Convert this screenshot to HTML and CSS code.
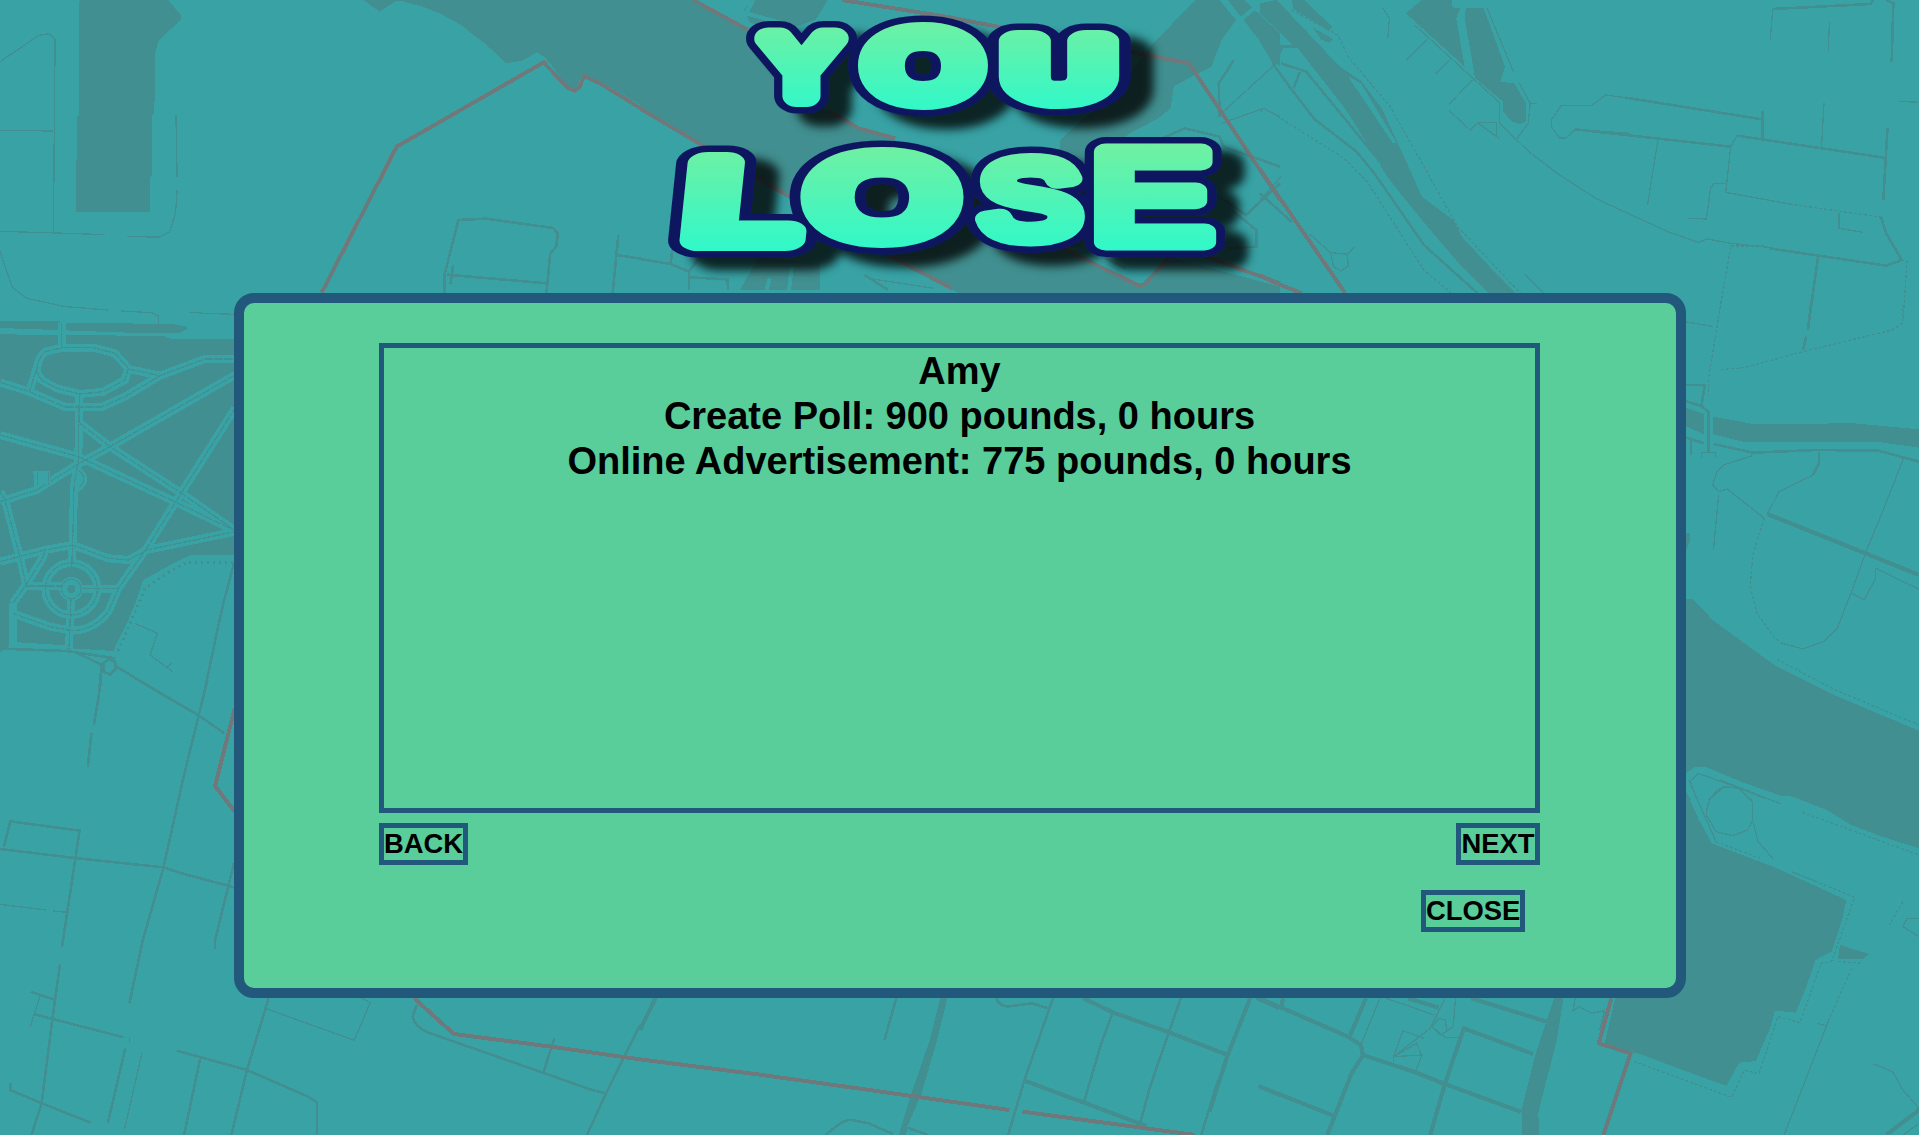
FILE: index.html
```
<!DOCTYPE html>
<html lang="en">
<head>
<meta charset="utf-8">
<title>You Lose</title>
<link rel="stylesheet" href="styles.css">
</head>
<body>
<svg class="map" viewBox="0 0 1919 1135" aria-hidden="true">
  <!-- north-west: docks, river and boundary -->
  <g transform="scale(.40816 .33333)">
    <path class="water" d="M198 0H412L443 45V60L388 122L381 155L378 340L372 345V528L367 532V636H186V600L189 350L194 345V5Z"/>
    <path class="water" d="M890 0L930 35L970 3H985L1040 22L1080 42L1130 75L1160 105L1190 132L1240 190L1280 182L1315 157L1335 172L1390 255L1410 270L1425 225L1450 232L1500 265L1570 315V0Z"/>
    <path class="road" d="M0 185L95 106L120 101L135 120L133 390L131 697M0 391L130 393M0 694L140 699L258 704M312 710L390 711L415 697L430 640L434 570M434 530L431 345M0 755L30 862L65 895L160 920L265 930M296 933L372 938L388 948V972M462 936L500 940L575 943"/>
    <path class="water" d="M0 964H148V984H0ZM160 969L420 972L458 980V990H160Z"/>
    <path class="road r3" d="M1089 878V825L1123 660L1190 656L1355 684L1367 700L1363 738L1348 762L1339 878M1095 824L1339 850M1110 795L1104 852M1515 705L1501 878M1512 765L1570 776"/>
    <path class="border" d="M788 878L972 440L1332 187L1390 262L1408 272L1420 262L1430 228L1470 250L1570 325"/>
  </g>
  <!-- river centre -->
  <g transform="translate(640 0) scale(.40816 .33333)">
    <path class="water" d="M0 0H140L260 90L460 330L535 385L620 415L1030 740L1220 860L1300 772L1568 860V885H790L600 765L370 595L165 440L0 318Z"/>
    <path class="water" d="M275 0H460L430 60L380 80L270 70L255 30ZM1360 0L1250 140L1180 250L1030 420L1030 740H1080L1150 450L1200 400L1270 355L1300 325L1308 258L1400 200L1425 120L1460 60L1420 0ZM1440 0L1568 200V100L1480 0ZM290 770L440 790V870H245Z"/>
    <path class="land-line" d="M278 0L260 40L350 70M480 0L440 60M1530 0L1460 70L1450 180L1415 250M310 870L318 835M365 870L372 800"/>
    <path class="road r3" d="M0 777L75 792L120 815L165 740M75 790L85 690M120 815V870M120 832L214 838L216 870M550 825L608 870M1140 775L1190 805M1270 420L1335 385L1420 410L1430 440L1568 500M1420 350L1418 250L1455 180M1380 560L1485 645L1568 550M1450 630L1510 690V740L1440 745"/>
    <path class="road" d="M1425 370L1528 325L1568 350M1420 345L1568 180M560 835L720 865"/>
    <path class="border" d="M130 0L265 90M495 0L750 50L910 88M1200 155L1345 190L1568 600M0 325L165 445L380 600M460 330L535 385L625 415M600 760L765 866M1020 735L1220 856L1235 853L1300 770M1375 765L1568 850"/>
  </g>
  <!-- north-east: railway and streets -->
  <g transform="translate(1260) scale(.42028 .33333)">
    <path class="water" d="M0 10L40 0L190 200L240 242L290 325L350 490L385 590L460 660L480 710L550 805L608 880H545L480 800L405 690L340 590L300 525L205 330L90 145H55L35 200L0 125V70L50 135H78L0 40ZM75 0H105L172 80L165 92L80 28ZM125 82L175 118L163 128L145 118ZM385 0H457V22L477 24L467 55L487 200L347 40ZM490 24H532L583 200L572 245L605 250L633 310V365L620 373L600 365L578 335V305L512 235L487 55Z"/>
    <path class="land-fill" d="M210 230L240 250L325 428L315 428ZM108 220L292 498L275 488L128 275Z"/>
    <path class="road r3" d="M30 190L70 260L130 358L230 455L272 520L390 735L518 880M50 190L110 215L292 495M80 265L95 215M0 580L75 665M1220 27L1452 12L1460 0M1490 0L1507 10L1503 185M1493 385L1483 600M1195 332V415M1478 652L1490 700L1527 780L1490 797L1212 745M1328 770L1305 975M750 388L1120 440M1135 407L1485 473M870 293L1195 358"/>
    <path class="road" d="M292 24L308 55L304 115M398 118L348 182M450 182L418 222M368 75L570 308V370L640 455L705 518L800 596L970 695L1043 727L1065 717L1120 730L1210 742M505 240L450 313M450 332L500 390L520 368H563V410M520 370L568 415M540 24L603 215M617 250L643 310L638 370L612 415M658 310H640M870 293L822 285L790 316H717L693 360V380L713 414H728L750 388L880 400M948 410L922 615M1120 440L1135 407M1120 440L1108 577L1260 612M1107 550H1080L1072 565L1062 657L1018 655M1378 640V685L1435 697M1342 310L1336 442M1355 65L1352 155M1220 27L1214 120M1520 304L1568 307M630 822L676 880M118 702L168 758L208 763L225 740M168 758L175 800L192 813L210 798L208 763M50 530L0 600"/>
    <path class="road dots" d="M0 335L12 326L200 475L255 545L390 810L455 880M75 30L185 105L210 170L310 320L390 500L470 680L620 880M1260 612L1480 652M1120 740L1086 990M1540 780L1530 960M1120 738H1200"/>
    <path class="border" d="M0 508L203 880M0 825L30 845L100 880"/>
  </g>
  <!-- west park -->
  <g transform="translate(0 300) scale(.33333)">
    <path class="water" d="M0 65L190 68L520 72L560 85V100H440L0 84ZM0 103L490 108L510 116H705V766H570L520 790L430 840L410 900L385 960L340 1053L215 1045L200 1050L30 1040L0 1056Z"/>
    <path class="path" d="M185 70V140M110 215Q112 175 135 155L190 143H280L345 160L385 205L375 240L310 275L240 282L170 265L125 240ZM110 205L88 275M0 247L88 275L195 321H305L375 290L480 227L615 177H705M385 207L480 227M238 282L235 480L222 560L218 735L215 800M0 405L235 470L525 605L700 690M240 370L330 440L545 580L700 688M0 605L110 570L230 495L330 440L705 225M705 325L540 585L440 745L355 865L325 935Q280 992 215 992L150 980L38 940M0 785L135 750L218 735L325 775L385 780L440 750L705 695M0 575L15 600L62 780L78 855L38 910M78 855L130 770L135 750M78 858H185M245 866H355M213 895L207 1045M38 910V1038L200 1048"/>
    <circle class="path" cx="214" cy="867" r="78"/><circle class="path" cx="214" cy="867" r="24"/>
    <path class="path-core" d="M185 70V140M110 215Q112 175 135 155L190 143H280L345 160L385 205L375 240L310 275L240 282L170 265L125 240ZM110 205L88 275M0 247L88 275L195 321H305L375 290L480 227L615 177H705M385 207L480 227M238 282L235 480L222 560L218 735L215 800M0 405L235 470L525 605L700 690M240 370L330 440L545 580L700 688M0 605L110 570L230 495L330 440L705 225M705 325L540 585L440 745L355 865L325 935Q280 992 215 992L150 980L38 940M0 785L135 750L218 735L325 775L385 780L440 750L705 695M0 575L15 600L62 780L78 855L38 910M78 855L130 770L135 750M78 858H185M245 866H355M213 895L207 1045"/>
    <ellipse class="water" cx="245" cy="210" rx="116" ry="54"/>
    <circle class="path-core" cx="214" cy="867" r="78"/><circle class="path-core" cx="214" cy="867" r="29"/>
    <path class="land-fill" d="M100 513H150V550L103 560ZM235 500Q290 535 235 577ZM555 90H700V112H510Z"/>
    <path class="path-core" d="M112 515V555M145 515V555M238 512Q265 537 238 562"/>
    <path class="road cross" d="M700 787H560L500 820L435 865L410 925L350 1062"/>
    <path class="road r3" d="M0 1046L200 1053L345 1075M230 1058L305 1095L295 1200M350 1100L515 1200M702 790L670 910L650 1000L608 1200M310 1090L325 1078L345 1085L348 1105L330 1123L310 1115Z"/>
    <path class="road" d="M405 970L472 1000L450 1065L518 1115M500 1102L515 1090"/>
  </g>
  <!-- south-west streets -->
  <g transform="translate(0 680) scale(.40816 .33333)">
    <path class="road r3" d="M248 0L230 135M224 160L215 262M338 0L485 105L550 160M508 0L450 290L400 565L350 780L317 970M10 500L25 424L195 452L165 695L152 800M0 507L190 535L400 562L445 580L573 622M573 550L527 780V808M147 853L128 1020L102 1270L77 1365M75 935L135 960M85 1003L303 1072M307 1105L264 1330M25 1210V1230L102 1270L222 1328M433 1112L605 1170L755 1250L777 1268V1365M490 1138L451 1365M658 955L605 1170L567 1365M1021 975L1011 1010Q1015 1040 1050 1058L1330 1178L1450 1230L1485 1240L1438 1365M1568 1035L1485 1240M1358 1075L1331 1178"/>
    <path class="road" d="M0 673L113 690M130 693L165 697M98 948L74 1040M348 1118L305 1348M318 1072V1088M650 985L868 1081L907 968L885 953"/>
    <path class="border" d="M575 85L527 318L575 395M1015 955L1112 1062L1350 1100L1568 1138"/>
  </g>
  <!-- south centre -->
  <g transform="translate(640 960) scale(.40816 .33333)">
    <path class="water" d="M736 114H753L728 240L690 400L655 500L652 525H634L665 400L710 240Z"/>
    <path class="road r3" d="M628 114L599 240M455 525Q500 475 520 480L560 490L620 522M655 503L705 525M873 114Q880 142 905 139L960 130L1000 145M1012 114L942 360L902 525M1158 158L1130 250L1088 425M1325 114L1292 230L1250 380L1224 495M1415 365L1375 525"/>
    <path class="road r4" d="M38 114L0 210M942 362L1088 428L1240 498M1085 114L1160 158L1292 215L1440 285M1495 114L1440 285L1395 455M1515 378L1568 405M1510 114L1568 145"/>
    <path class="border" d="M0 298L300 345L620 400L905 450M937 455L1210 500L1360 525"/>
  </g>
  <!-- south-east streets and basin -->
  <g transform="translate(1260 780) scale(.42028 .33333)">
    <path class="water" d="M1010 25L1045 120L1075 190L1225 262L1395 360L1385 420L1360 515L1322 540L1300 620L1275 698L1225 692L1215 740L1180 843L1140 848L1110 917L1070 900L910 825L820 790L845 655H1012ZM1380 495L1450 522L1435 537H1375ZM700 655H722L706 780L662 1000L665 1065H624L622 990L656 820Z"/>
    <path class="water" d="M980 620H1020V660H980Z"/>
    <path class="road r4" d="M0 655L210 770L240 795L245 825L370 877L440 912L620 995M245 825L218 880L160 1065M252 655L213 770M55 655L50 682M0 920L175 1007M352 655L425 683M503 655L610 697L690 728M650 822L485 745L440 912L405 1065M1568 990L1490 1065"/>
    <path class="road" d="M285 655L240 795M300 655L415 705M440 655L405 745L318 830L340 752L390 775M318 830L385 825L372 790L318 830V845M385 825L370 875M465 655L460 740L430 765L410 740L425 715L440 720L445 750M410 740L440 772H475M750 655L745 692L760 680L790 700L820 692M820 692L808 750M1355 715L1247 1065M1325 730L1350 738M1460 852L1505 875L1530 930L1568 985M1095 0L1240 72M1105 20Q1065 40 1062 105L1085 155L1125 167L1160 150L1172 120V65L1140 25ZM1172 120L1185 185L1220 235M1265 275L1320 303M1020 0L1085 185M1568 415L1540 415L1530 440L1568 470M1568 1030L1530 1065"/>
    <path class="road dots" d="M1290 97L1568 225M1320 303L1415 352L1360 545L1335 550L1285 728L1232 710L1187 882L1152 870L1122 952L885 842M1085 185L1190 235M1530 365L1497 435M1408 565L1355 715M1375 545L1435 550"/>
    <path class="border" d="M836 655L806 790L882 820L817 1065"/>
  </g>
  <!-- east bank -->
  <g transform="translate(1380 300) scale(.34375 .33333)">
    <path class="water" d="M888 323L943 342V403L888 378ZM970 350L1085 372L1380 370L1568 388V443L1450 426H1060L970 403ZM888 897H910L970 962L1150 1097L1310 1180L1470 1250L1568 1292V1645L1460 1610L1370 1575L1300 1530L1200 1490L1165 1487L1050 1445L950 1402H915L888 1420ZM888 1470L905 1500H888ZM890 700H902V720L890 755Z"/>
    <path class="road r3" d="M888 412L943 430M970 432L1085 458L1270 450L1450 452L1568 485M1255 0L1245 90M1240 110L1230 150M888 303L935 318L955 335V460M935 318L945 255L888 255M1277 455V490L1260 525"/>
    <path class="road r4" d="M1127 642L1260 697L1412 760L1568 825"/>
    <path class="road" d="M888 65L970 80M935 475V458H975V475M905 420V465M1085 458L1080 468L1000 495L980 515L968 555L985 575L1010 567L1118 655M1260 525L1160 575L1127 642M1522 478L1460 640L1412 760L1370 880L1330 985L1290 1025L1230 1047L1170 1030M1370 878L1408 900L1442 835V805L1568 868M985 585L970 750M903 1445L925 1420L1020 1455L1120 1495M955 1500L1000 1462H1040L1080 1500"/>
    <path class="road dots" d="M993 0L955 240V285M1118 655L1085 760L1077 860L1097 940L1145 1010L1170 1030M1155 1078L1320 1168L1568 1275M993 208L1060 203L1230 155L1490 90L1520 70V15M903 1445L920 1495"/>
  </g>
</svg>

<main class="screen">
  <h1 class="title">
    <svg class="title-art" viewBox="640 0 640 293" role="img" aria-label="You lose">
      <defs>
        <linearGradient id="fill-top" gradientUnits="userSpaceOnUse" x1="0" y1="20" x2="0" y2="112"><stop offset="0" stop-color="#70f0a2"/><stop offset="1" stop-color="#30f8ca"/></linearGradient>
        <linearGradient id="fill-bottom" gradientUnits="userSpaceOnUse" x1="0" y1="145" x2="0" y2="252"><stop offset="0" stop-color="#70f0a2"/><stop offset="1" stop-color="#30f8ca"/></linearGradient>
        <filter id="shade" x="-10%" y="-10%" width="125%" height="130%"><feDropShadow dx="23" dy="13" stdDeviation="5" flood-color="#000" flood-opacity=".78"/></filter>
        <g id="you">
          <text x="766" y="96" font-size="83" textLength="71" lengthAdjust="spacingAndGlyphs">Y</text>
          <text x="868" y="98" font-size="93" textLength="110" lengthAdjust="spacingAndGlyphs">O</text>
          <text x="1007" y="97" font-size="82" textLength="104" lengthAdjust="spacingAndGlyphs">U</text>
        </g>
        <g id="lose">
          <text transform="translate(25) skewX(-6)" x="683" y="240" font-size="112" textLength="110" lengthAdjust="spacingAndGlyphs">L</text>
          <text x="810" y="236" font-size="111" textLength="144" lengthAdjust="spacingAndGlyphs">O</text>
          <text class="slim" x="980" y="237" font-size="108" textLength="100" lengthAdjust="spacingAndGlyphs">S</text>
          <text class="slim" x="1091" y="242" font-size="129" textLength="121" lengthAdjust="spacingAndGlyphs">E</text>
        </g>
      </defs>
      <g class="letters" filter="url(#shade)">
        <use class="rim" href="#you"/>
        <use class="rim" href="#lose"/>
        <use class="face face-top" href="#you"/>
        <use class="face face-bottom" href="#lose"/>
      </g>
    </svg>
  </h1>

  <section class="panel">
    <div class="log">
      <p>Amy</p>
      <p>Create Poll: 900 pounds, 0 hours</p>
      <p>Online Advertisement: 775 pounds, 0 hours</p>
    </div>
    <nav class="pager">
      <button class="btn btn-back">BACK</button>
      <button class="btn btn-next">NEXT</button>
    </nav>
    <footer class="actions">
      <button class="btn btn-close">CLOSE</button>
    </footer>
  </section>
</main>
</body>
</html>
```

FILE: styles.css
```
* { box-sizing: border-box; }

body {
  margin: 0;
  height: 1135px;
  overflow: hidden;
  background: #38a2a5;
  color: #000;
  font-family: "Liberation Sans", Arial, sans-serif;
  font-weight: bold;
}

.map {
  position: absolute;
  inset: 0;
  z-index: -1;
  width: 1919px;
  height: 1135px;
  shape-rendering: crispEdges;
}
.map path, .map circle { fill: none; vector-effect: non-scaling-stroke; }
.map .water { fill: #418f90; }
.map .land-fill { fill: #38a2a5; }
.map .land-line { stroke: #38a2a5; stroke-width: 4; }
.map .road { stroke: #418f90; stroke-width: 1.3; }
.map .r3 { stroke-width: 2.6; }
.map .r4 { stroke-width: 4.2; }
.map .dots { stroke-dasharray: 3 2; }
.map .cross { stroke-width: 3; stroke-dasharray: 2 4; }
.map .path { stroke: #38a2a5; stroke-width: 8; }
.map .path-core { stroke: #418f90; stroke-width: 1.3; stroke-dasharray: 9 1; }
.map .border { stroke: #6f797c; stroke-width: 4; stroke-linejoin: round; }

.screen {
  display: flex;
  flex-direction: column;
  align-items: center;
}

.title { margin: 0; height: 293px; font-weight: normal; }
.title-art { display: block; width: 640px; height: 293px; overflow: visible; }
.letters { stroke-linejoin: round; stroke-linecap: round; }
.title-art text { stroke-width: calc(22px + var(--edge)); }
.title-art .slim { stroke-width: calc(17px + var(--edge)); }
.rim { --edge: 13px; fill: #0d175f; stroke: #0d175f; }
.face { --edge: 0px; }
.face-top { fill: url(#fill-top); stroke: url(#fill-top); }
.face-bottom { fill: url(#fill-bottom); stroke: url(#fill-bottom); }

.panel {
  width: 1452px;
  height: 705px;
  margin-left: 1px;
  padding: 40px 136px 0 135px;
  border: 10px solid #22587b;
  border-radius: 20px;
  background: #59ce9a;
}

.log {
  height: 470px;
  padding-top: 1px;
  border: 5px solid #22587b;
  text-align: center;
  font-size: 38px;
  line-height: 45px;
}
.log p { margin: 0; }

.pager {
  display: flex;
  justify-content: space-between;
  margin-top: 10px;
}

.actions {
  display: flex;
  justify-content: flex-end;
  margin-top: 25px;
  padding-right: 15px;
}

.btn {
  height: 42px;
  padding: 0;
  border: 5px solid #22587b;
  background: none;
  color: inherit;
  font: bold 27.4px/30px "Liberation Sans", Arial, sans-serif;
  white-space: nowrap;
}
.btn-back { width: 89px; }
.btn-next { width: 84px; }
.btn-close { width: 104px; }
```
